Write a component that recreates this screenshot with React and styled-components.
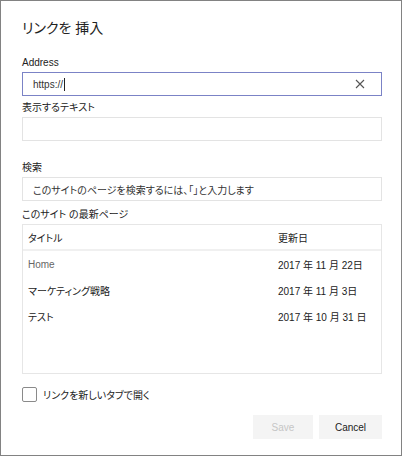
import React from "react";
import styled, { createGlobalStyle } from "styled-components";

const Global = createGlobalStyle`
  html, body { margin: 0; padding: 0; background: #ffffff; }
  body { font-family: "Liberation Sans", "Noto Sans CJK JP", sans-serif; }
  * { box-sizing: border-box; }
`;

const FONT = `"Segoe UI", "Liberation Sans", "Noto Sans CJK JP", sans-serif`;

const Dialog = styled.div`
  width: 402px;
  height: 456px;
  border: 1px solid #828282;
  padding: 17px 19px 0 21px;
  display: flex;
  flex-direction: column;
  font-family: ${FONT};
  font-feature-settings: "palt";
  color: #222;
`;

const Title = styled.h1`
  margin: 0 0 18px 0;
  font-size: 14px;
  line-height: 20px;
  font-weight: 400;
  color: #222;
`;

const Label = styled.div`
  font-size: 10px;
  line-height: 14px;
  height: 14px;
  margin-top: ${(p) => p.$mt || 0}px;
  margin-bottom: ${(p) => p.$mb ?? 2}px;
  color: #222;
`;

const InputBox = styled.div`
  height: 24px;
  width: 360px;
  border: 1px solid ${(p) => (p.$focused ? "#7b83c6" : "#e3e3e3")};
  display: flex;
  align-items: center;
  padding: 0 16px 0 10px;
  font-size: 10px;
  color: #333;
`;

const Caret = styled.span`
  display: inline-block;
  width: 1px;
  height: 13px;
  background: #222;
  margin-left: 1px;
`;

const InputText = styled.span`
  flex: 1;
  display: flex;
  align-items: center;
`;

const ClearIcon = styled.svg`
  width: 10px;
  height: 10px;
  flex: none;
`;

const Table = styled.div`
  width: 360px;
  height: 150px;
  border: 1px solid #e6e6e6;
  display: flex;
  flex-direction: column;
`;

const Row = styled.div`
  display: grid;
  grid-template-columns: 1fr 103px;
  align-items: center;
  height: 26px;
  padding-left: 5px;
  font-size: 10px;
  border-bottom: ${(p) => (p.$header ? "2px solid #f0f0f0" : "none")};
`;

const Cell = styled.div`
  color: ${(p) => (p.$muted ? "#666" : "#222")};
  white-space: nowrap;
`;

const CheckRow = styled.label`
  display: flex;
  align-items: center;
  gap: 6px;
  margin-top: 13px;
  font-size: 10px;
  color: #222;
`;

const CheckBox = styled.span`
  width: 15px;
  height: 15px;
  border: 1px solid #8a8a8a;
  border-radius: 2px;
  background: #fff;
`;

const Buttons = styled.div`
  display: flex;
  justify-content: flex-end;
  gap: 6px;
  margin-top: 13px;
`;

const Button = styled.button`
  height: 24px;
  width: ${(p) => p.$w}px;
  border: none;
  background: #f4f4f4;
  color: ${(p) => (p.disabled ? "#c6c6c6" : "#222")};
  font-family: ${FONT};
  font-size: 10px;
  padding: 0;
`;

const rows = [
  { t: "Home", d: "2017 年 11 月 22日", muted: true },
  { t: "マーケティング戦略", d: "2017 年 11 月 3日" },
  { t: "テスト", d: "2017 年 10 月 31 日" },
];

export default function App() {
  return (
    <>
      <Global />
      <Dialog>
        <Title>リンクを 挿入</Title>
        <Label>Address</Label>
        <InputBox $focused>
          <InputText>
            https://<Caret />
          </InputText>
          <ClearIcon viewBox="0 0 10 10">
            <path d="M1 1 L9 9 M9 1 L1 9" stroke="#555" strokeWidth="1.1" />
          </ClearIcon>
        </InputBox>
        <Label $mt={5}>表示するテキスト</Label>
        <InputBox />
        <Label $mt={20}>検索</Label>
        <InputBox>このサイトのページを検索するには、「」と入力します</InputBox>
        <Label $mt={7}>このサイト の最新ページ</Label>
        <Table>
          <Row $header>
            <Cell>タイトル</Cell>
            <Cell>更新日</Cell>
          </Row>
          {rows.map((r) => (
            <Row key={r.t}>
              <Cell $muted={r.muted}>{r.t}</Cell>
              <Cell>{r.d}</Cell>
            </Row>
          ))}
        </Table>
        <CheckRow>
          <CheckBox />
          リンクを新しいタブで開く
        </CheckRow>
        <Buttons>
          <Button $w={60} disabled>Save</Button>
          <Button $w={63}>Cancel</Button>
        </Buttons>
      </Dialog>
    </>
  );
}
